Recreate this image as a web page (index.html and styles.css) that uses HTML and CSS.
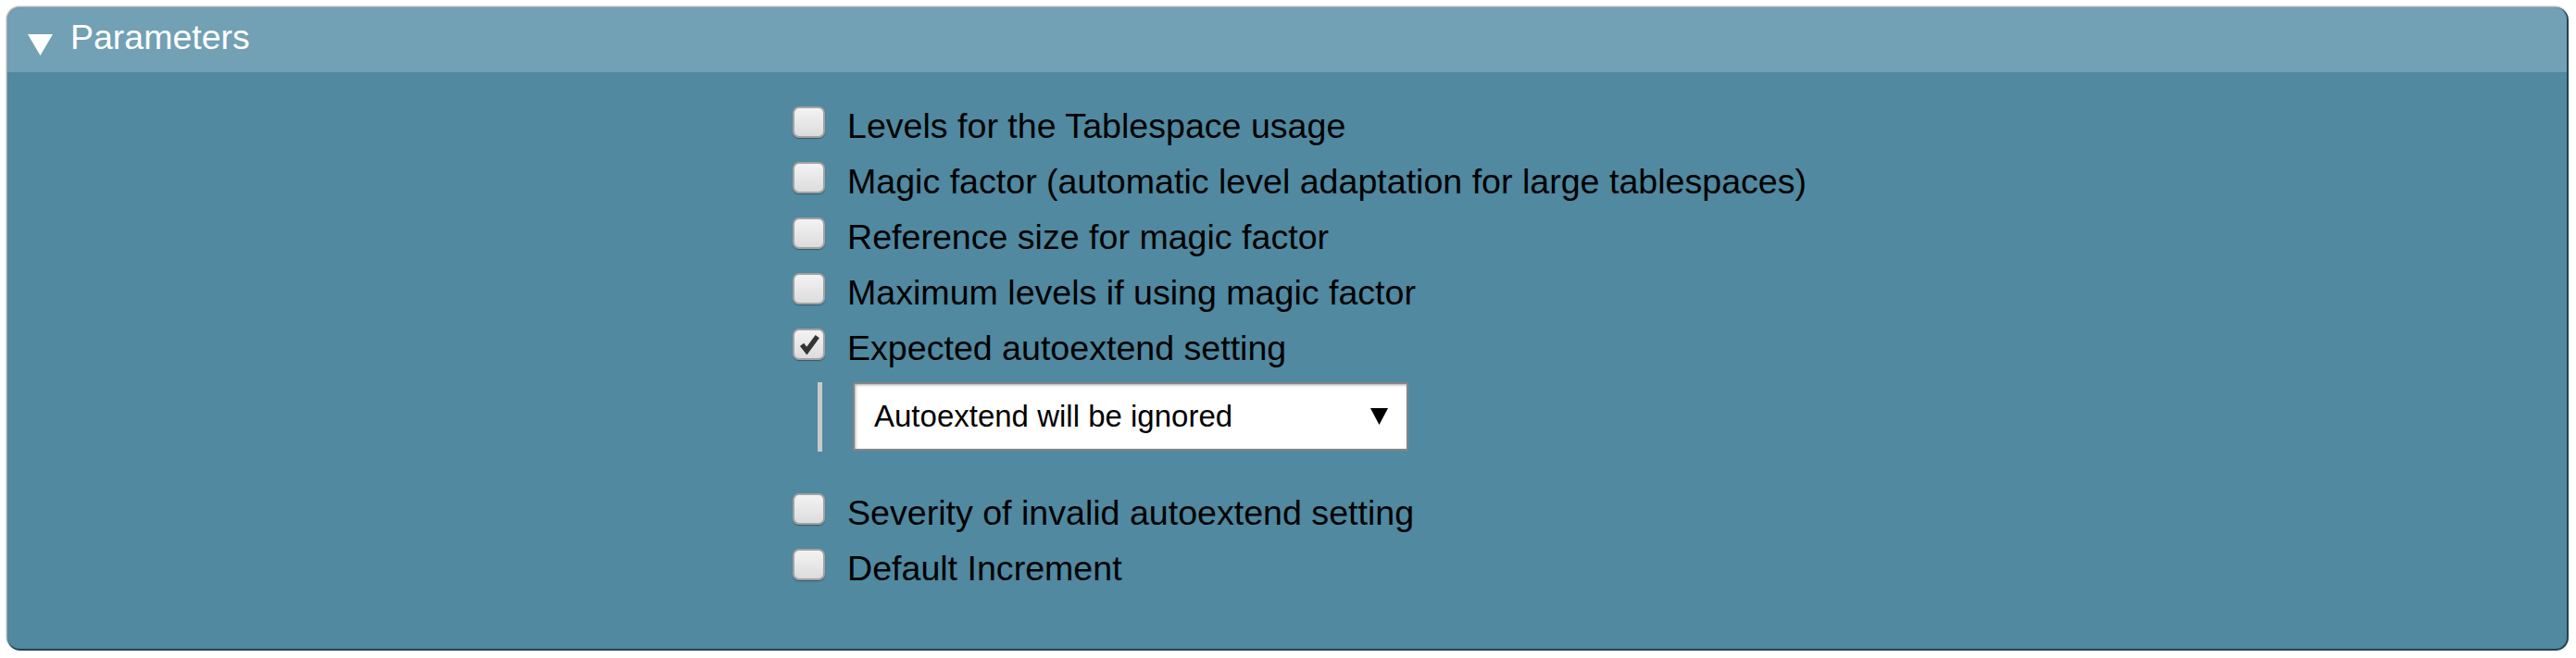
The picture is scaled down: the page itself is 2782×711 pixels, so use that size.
FILE: index.html
```html
<!DOCTYPE html>
<html>
<head>
<meta charset="utf-8">
<link rel="stylesheet" href="styles.css">
</head>
<body>
<div class="panel">
  <div class="head">
    <svg class="tri" viewBox="0 0 27 23" width="27" height="23"><polygon points="0,0 27,0 13.5,23" fill="#fff"/></svg>
    <span class="title">Parameters</span>
  </div>
  <div class="body">
    <div class="opt"><span class="cb"></span><span class="lbl">Levels for the Tablespace usage</span></div>
    <div class="opt"><span class="cb"></span><span class="lbl">Magic factor (automatic level adaptation for large tablespaces)</span></div>
    <div class="opt"><span class="cb"></span><span class="lbl">Reference size for magic factor</span></div>
    <div class="opt"><span class="cb"></span><span class="lbl">Maximum levels if using magic factor</span></div>
    <div class="opt"><span class="cb"><svg class="chk" viewBox="0 0 34 34"><path d="M8.5 17.5 L14.5 25 L27.5 7.5" fill="none" stroke="#333" stroke-width="6" stroke-linejoin="miter" stroke-linecap="butt"/></svg></span><span class="lbl">Expected autoextend setting</span></div>
    <div class="sub">
      <div class="bar"></div>
      <div class="select">
        <span class="selval">Autoextend will be ignored</span>
        <svg class="arrow" viewBox="0 0 19 18" width="19" height="18"><polygon points="0,0 19,0 9.5,18" fill="#000"/></svg>
      </div>
    </div>
    <div class="opt"><span class="cb"></span><span class="lbl">Severity of invalid autoextend setting</span></div>
    <div class="opt"><span class="cb"></span><span class="lbl">Default Increment</span></div>
  </div>
</div>
</body>
</html>
```
FILE: styles.css
```css
html, body {
  margin: 0;
  padding: 0;
  background: #ffffff;
}
body {
  padding: 8px;
  font-family: "Liberation Sans", Arial, sans-serif;
}
.panel {
  border-radius: 14px;
  overflow: hidden;
  background: #5089a0;
  border-right: 2px solid #1f4552;
  border-bottom: 2px solid #1f4552;
  box-shadow: -1px -1px 2px rgba(0, 0, 0, 0.45);
}
.head {
  height: 70px;
  box-sizing: border-box;
  background: #72a0b4;
  display: flex;
  align-items: flex-start;
  padding-left: 22px;
}
.tri {
  display: block;
  margin-top: 29px;
  flex: none;
}
.title {
  color: #ffffff;
  font-size: 37.5px;
  line-height: 64px;
  margin-left: 19px;
}
.body {
  padding: 28px 0 57px 848px;
}
.opt {
  height: 60px;
  line-height: 60px;
  font-size: 37.6px;
  color: #000;
  white-space: nowrap;
}
.cb {
  display: inline-block;
  width: 35px;
  height: 34px;
  box-sizing: border-box;
  vertical-align: baseline;
  border: 2px solid #a2a2a2;
  border-radius: 7px;
  background: linear-gradient(#f3f3f3, #dcdcdc);
  box-shadow: 0 1px 1px rgba(0, 0, 0, 0.35);
}
.chk {
  display: block;
  width: 31px;
  height: 30px;
}
.lbl {
  margin-left: 24px;
}
.sub {
  display: flex;
  margin: 7px 0 36px 27px;
  height: 75px;
}
.bar {
  width: 5px;
  background: #c9c9c9;
  flex: none;
}
.select {
  margin-left: 33px;
  width: 600px;
  height: 74px;
  box-sizing: border-box;
  background: #ffffff;
  border: 2px solid #858585;
  box-shadow: inset 1px 1px 3px rgba(0, 0, 0, 0.35);
  display: flex;
  align-items: center;
  justify-content: space-between;
  padding: 0 20px 0 21px;
}
.selval {
  font-size: 33px;
  color: #000;
  white-space: nowrap;
}
.arrow {
  display: block;
  flex: none;
}
```
